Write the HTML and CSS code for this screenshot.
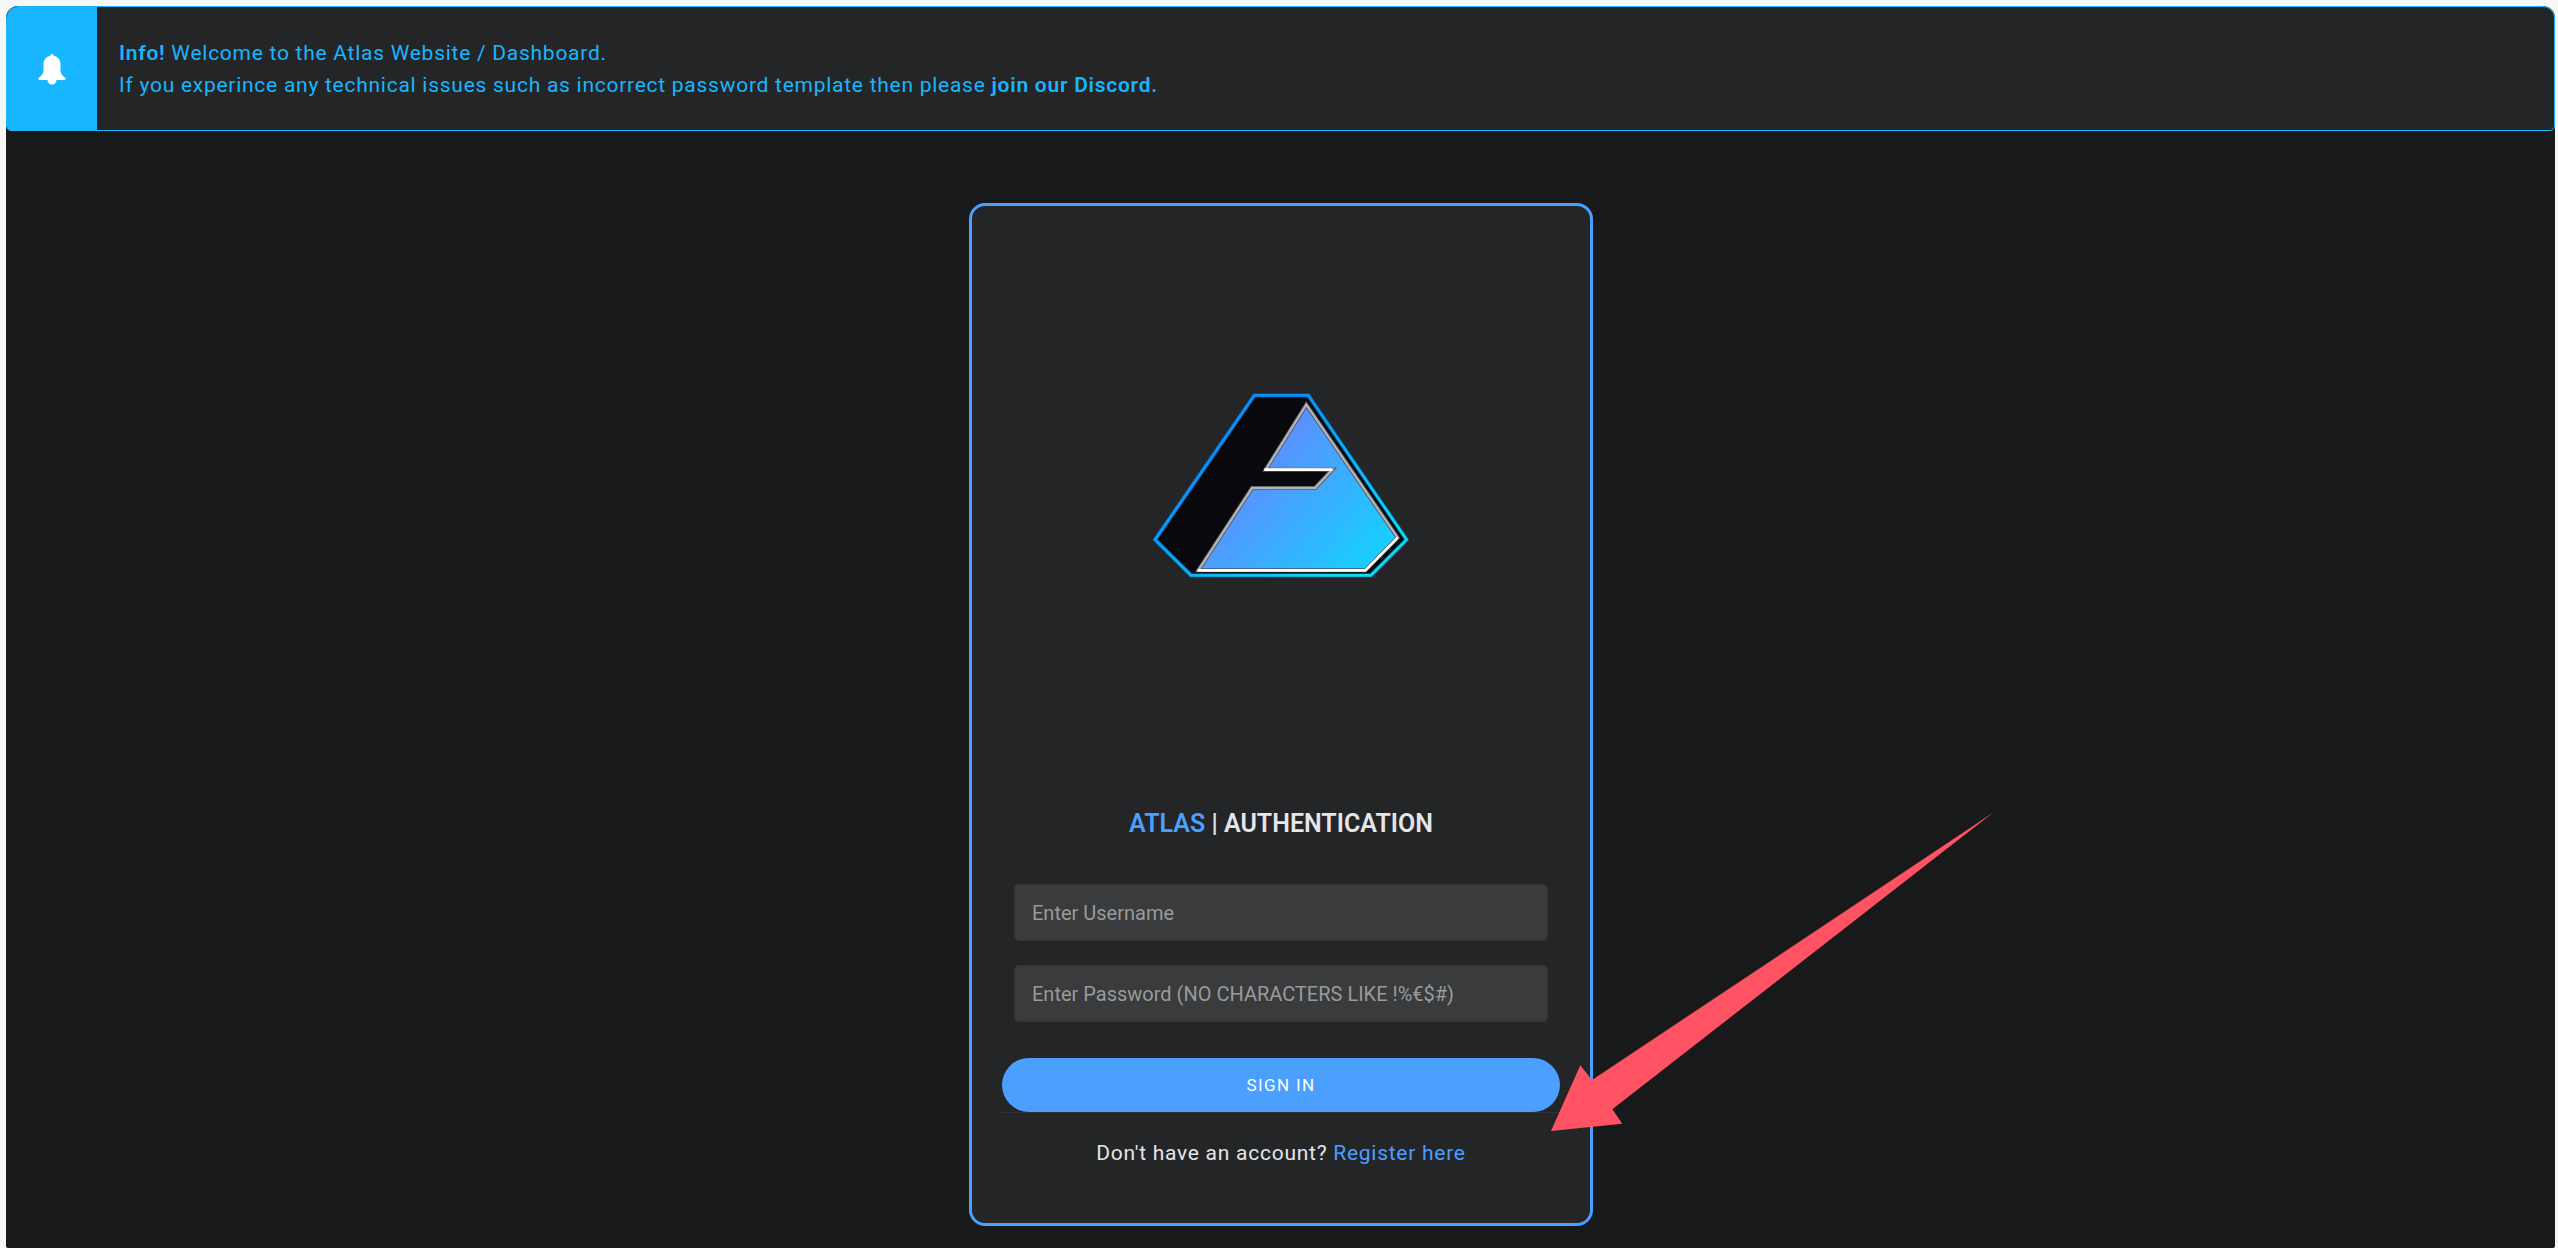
FILE: index.html
```
<!DOCTYPE html>
<html lang="en">
<head>
  <meta charset="UTF-8">
  <meta name="viewport" content="width=device-width, initial-scale=1.0">
  <title>Atlas | Authentication</title>
  <link rel="stylesheet" href="styles.css">
</head>
<body>
  <div class="page">
    <div class="alert">
      <div class="alert-icon">
        <svg viewBox="0 0 28 31" width="28" height="31" aria-hidden="true">
          <path d="M14 0c-1 0-1.700.8-1.700 1.700C8 2.500 5.500 6 5.500 10v5c0 4-1.200 6.300-4.700 8.800C0 24.600.4 26 1.600 26h24.800c1.200 0 1.600-1.400.8-2.200C23.700 21.300 22.500 19 22.500 15v-5c0-4-2.500-7.500-6.800-8.300C15.700.8 15 0 14 0z" fill="#fff"/>
          <path d="M9.500 26a4.500 4.500 0 0 0 9 0z" fill="#fff"/>
        </svg>
      </div>
      <div class="alert-text">
        <strong>Info!</strong> Welcome to the Atlas Website / Dashboard.<br>
        If you experince any technical issues such as incorrect password template then please <a href="#"><strong>join our Discord.</strong></a>
      </div>
    </div>

    <main class="card-wrap">
      <div class="card">
        <svg class="logo" viewBox="0 0 558 558" role="img" aria-label="Atlas">
          <defs>
            <linearGradient id="edge" x1="0" y1="0" x2="1" y2="1">
              <stop offset="0.3" stop-color="#0890ff"/>
              <stop offset="0.85" stop-color="#0cdcf0"/>
            </linearGradient>
            <linearGradient id="fill" gradientUnits="userSpaceOnUse" x1="350" y1="220" x2="740" y2="560">
              <stop offset="0" stop-color="#6487ff"/>
              <stop offset="1" stop-color="#17cffe"/>
            </linearGradient>
          </defs>
          <g transform="translate(128 164) scale(0.3333)">
            <path d="M373 76H535L830 509 723 616H183L75 509Z" fill="#08080d" stroke="#0b5288" stroke-width="13"/>
            <path d="M373 76H535L830 509 723 616H183L75 509Z" fill="none" stroke="url(#edge)" stroke-width="8"/>
            <path d="M529 104L803 503 706 601H205L366 354H555L607 299H407Z" fill="url(#fill)" stroke="#4a5562" stroke-width="12"/>
            <path d="M529 104L803 503 706 601H205L366 354H555L607 299H407Z" fill="none" stroke="#b4b4b8" stroke-width="7"/>
            <path d="M803 503L706 601H203M403 299H607" fill="none" stroke="#fff" stroke-width="8"/>
          </g>
        </svg>

        <h1 class="title"><span>ATLAS</span> | AUTHENTICATION</h1>

        <form class="login">
          <div class="fields">
            <input class="field" type="text" placeholder="Enter Username" aria-label="Username">
            <input class="field" type="password" placeholder="Enter Password (NO CHARACTERS LIKE !%€$#)" aria-label="Password">
          </div>
          <div class="submit-row">
            <button class="submit" type="submit">SIGN IN</button>
          </div>
        </form>

        <p class="register">Don't have an account? <a href="#">Register here</a></p>

        <svg class="pointer" viewBox="0 0 443 320" width="443" height="320" aria-hidden="true">
          <path d="M0 319L29.300 253.300 41 268 443 0 61.300 297.300 71.300 311.700Z" fill="#ff5263"/>
        </svg>
      </div>
    </main>
  </div>
</body>
</html>
```
FILE: styles.css
```
* {
  box-sizing: border-box;
}
body {
  margin: 0;
  padding: 6px 3px 0 6px;
  background: #f7f7f7;
  font-family: Roboto, "Liberation Sans", sans-serif;
}
a {
  text-decoration: none;
}
.page {
  min-height: calc(100vh - 6px);
  background: #18191a;
  border-radius: 12px 12px 2px 2px;
}

/* info bar */
.alert {
  display: flex;
  overflow: hidden;
  background: #242526;
  border: 1px solid #17b6ff;
  border-radius: 12px 12px 5px 5px;
}
.alert-icon {
  display: flex;
  flex: 0 0 90px;
  justify-content: center;
  align-items: center;
  padding-top: 2px;
  background: #17b6ff;
}
.alert-text {
  padding: 30px 22px 29px;
  color: #17b6ff;
  font-size: 21px;
  line-height: 32px;
  letter-spacing: 0.035em;
}
.alert-text a {
  color: #17b6ff;
}
.alert-text strong {
  font-weight: 600;
}

/* login card */
.card-wrap {
  display: flex;
  justify-content: center;
  padding: 72px 0 22px 1px;
}
.card {
  position: relative;
  width: 100%;
  max-width: 624px;
  padding: 0 30px 54px;
  background: #242526;
  border: 3px solid #4b9ffe;
  border-radius: 16px;
  text-align: center;
}
.logo {
  display: block;
  width: 100%;
}
.title {
  margin: 44px 0;
  color: #e4e6eb;
  font-size: 25px;
  font-weight: 600;
  line-height: 32px;
}
.title span {
  color: #4b9ffe;
}
.fields {
  display: flex;
  flex-direction: column;
  gap: 24px;
  padding: 0 12px;
}
.field {
  width: 100%;
  height: 57px;
  padding: 0 17px;
  background: #3a3b3c;
  border: 1px solid #323335;
  border-radius: 5px;
  color: #e4e6eb;
  font-family: inherit;
  font-size: 20px;
}
.field::placeholder {
  color: #999a9b;
}
.submit-row {
  margin-top: 36px;
  border-bottom: 1px solid #323335;
}
.submit {
  display: block;
  width: 100%;
  height: 54px;
  background: #4b9ffe;
  border: none;
  border-radius: 27px;
  color: white;
  font-family: inherit;
  font-size: 17px;
  letter-spacing: 0.08em;
  cursor: pointer;
}
.register {
  margin: 24px 0 0;
  color: #e4e6eb;
  font-size: 21px;
  line-height: 32px;
  letter-spacing: 0.035em;
}
.register a {
  color: #4b9ffe;
}

/* arrow towards the register link */
.pointer {
  position: absolute;
  top: 606px;
  left: 579px;
}
```
